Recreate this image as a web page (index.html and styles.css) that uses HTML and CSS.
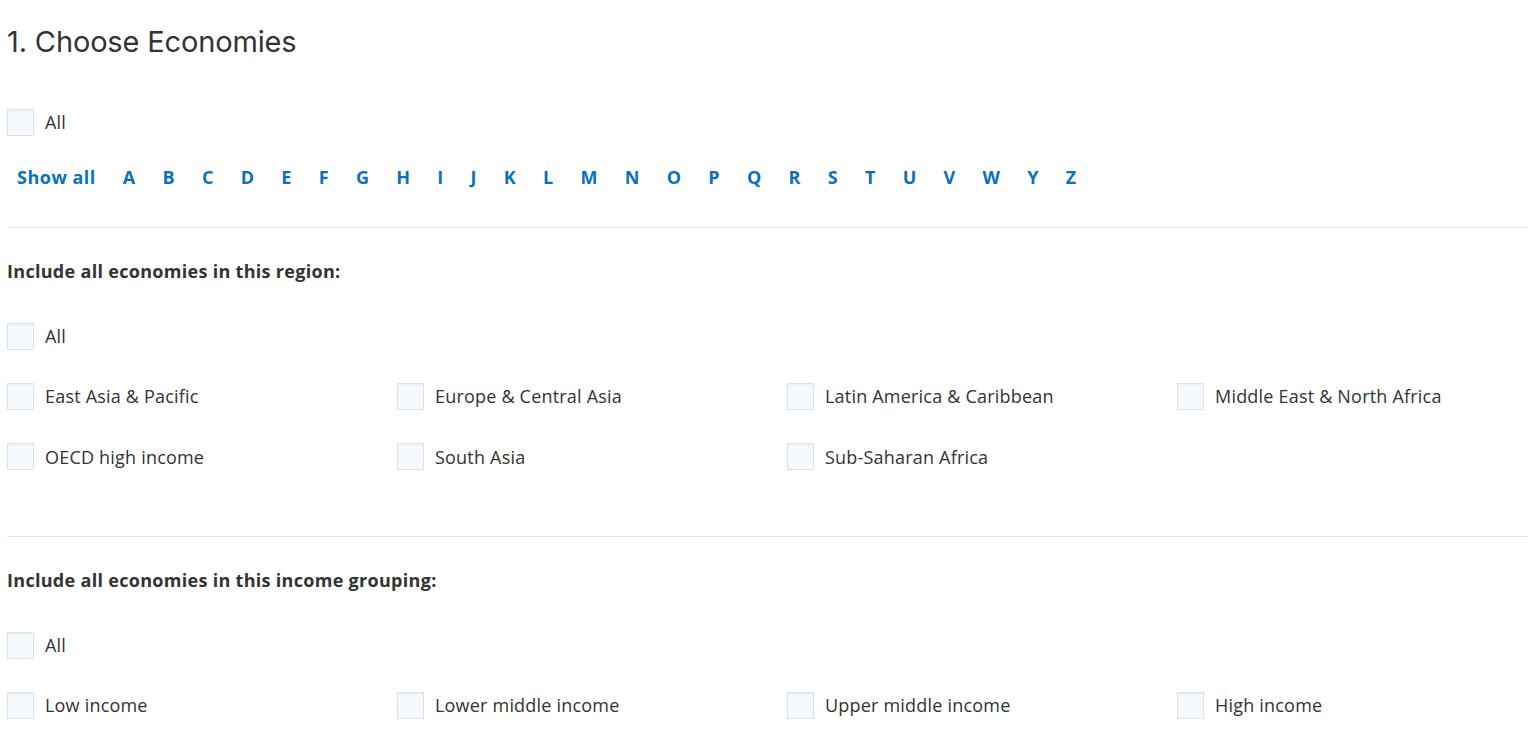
FILE: index.html
```html
<!DOCTYPE html>
<html lang="en">
<head>
<meta charset="utf-8">
<title>Choose Economies</title>
<link rel="stylesheet" href="styles.css">
</head>
<body>
<div class="page">
  <h1 class="title">1. Choose Economies</h1>

  <label class="check"><span class="box"></span><span class="lbl">All</span></label>

  <nav class="letters">
    <a href="#" class="letter first">Show all</a>
    <a href="#" class="letter">A</a><a href="#" class="letter">B</a><a href="#" class="letter">C</a><a href="#" class="letter">D</a><a href="#" class="letter">E</a><a href="#" class="letter">F</a><a href="#" class="letter">G</a><a href="#" class="letter">H</a><a href="#" class="letter">I</a><a href="#" class="letter">J</a><a href="#" class="letter">K</a><a href="#" class="letter">L</a><a href="#" class="letter">M</a><a href="#" class="letter">N</a><a href="#" class="letter">O</a><a href="#" class="letter">P</a><a href="#" class="letter">Q</a><a href="#" class="letter">R</a><a href="#" class="letter">S</a><a href="#" class="letter">T</a><a href="#" class="letter">U</a><a href="#" class="letter">V</a><a href="#" class="letter">W</a><a href="#" class="letter">Y</a><a href="#" class="letter">Z</a>
  </nav>

  <hr class="divider">

  <section class="group">
    <h2 class="group-title">Include all economies in this region:</h2>
    <label class="check"><span class="box"></span><span class="lbl">All</span></label>
    <div class="grid">
      <label class="check"><span class="box"></span><span class="lbl">East Asia &amp; Pacific</span></label>
      <label class="check"><span class="box"></span><span class="lbl">Europe &amp; Central Asia</span></label>
      <label class="check"><span class="box"></span><span class="lbl">Latin America &amp; Caribbean</span></label>
      <label class="check"><span class="box"></span><span class="lbl">Middle East &amp; North Africa</span></label>
      <label class="check"><span class="box"></span><span class="lbl">OECD high income</span></label>
      <label class="check"><span class="box"></span><span class="lbl">South Asia</span></label>
      <label class="check"><span class="box"></span><span class="lbl">Sub-Saharan Africa</span></label>
    </div>
  </section>

  <hr class="divider divider-2">

  <section class="group">
    <h2 class="group-title">Include all economies in this income grouping:</h2>
    <label class="check"><span class="box"></span><span class="lbl">All</span></label>
    <div class="grid">
      <label class="check"><span class="box"></span><span class="lbl">Low income</span></label>
      <label class="check"><span class="box"></span><span class="lbl">Lower middle income</span></label>
      <label class="check"><span class="box"></span><span class="lbl">Upper middle income</span></label>
      <label class="check"><span class="box"></span><span class="lbl">High income</span></label>
    </div>
  </section>
</div>
</body>
</html>
```

FILE: styles.css
```css
html, body {
  margin: 0;
  padding: 0;
  background: #ffffff;
}

body {
  font-family: "Open Sans", "Liberation Sans", sans-serif;
  color: #333333;
}

.page {
  padding: 0 1px 0 7px;
}

.title {
  margin: 0 0 32px 0;
  padding-top: 24px;
  font-family: Inter, "Liberation Sans", sans-serif;
  font-weight: 400;
  font-size: 29px;
  line-height: 36px;
  color: #333333;
  letter-spacing: -0.15px;
}

.check {
  display: flex;
  align-items: center;
  height: 60px;
  cursor: pointer;
}

.box {
  box-sizing: border-box;
  width: 27px;
  height: 27px;
  border: 1px solid #d5e4f3;
  background: #f6f9fd;
  box-shadow: inset 0 2px 0 #eef3f9;
  flex: none;
}

.lbl {
  margin-left: 11px;
  font-size: 18px;
  line-height: 24px;
  letter-spacing: 0.2px;
  color: #333333;
}

.letters {
  display: flex;
  align-items: center;
  height: 50px;
  padding-left: 10px;
}

.letter {
  font-weight: 700;
  font-size: 18px;
  color: #0a71ba;
  text-decoration: none;
  padding-right: 26.9px;
  letter-spacing: 0.4px;
}

.letter.first {
  letter-spacing: 0.5px;
  padding-right: 27px;
}

.divider {
  margin: 25px 0 0 0;
  border: 0;
  height: 1px;
  background: #e3e3e3;
}

.divider-2 {
  margin-top: 49px;
}

.group-title {
  margin: 28px 0 20px 0;
  font-size: 18px;
  line-height: 30px;
  font-weight: 700;
  letter-spacing: 0.3px;
  color: #333333;
}

.grid {
  display: grid;
  grid-template-columns: repeat(4, 390px);
  grid-auto-rows: 60.5px;
}

.grid .check {
  height: 60.5px;
}
```
